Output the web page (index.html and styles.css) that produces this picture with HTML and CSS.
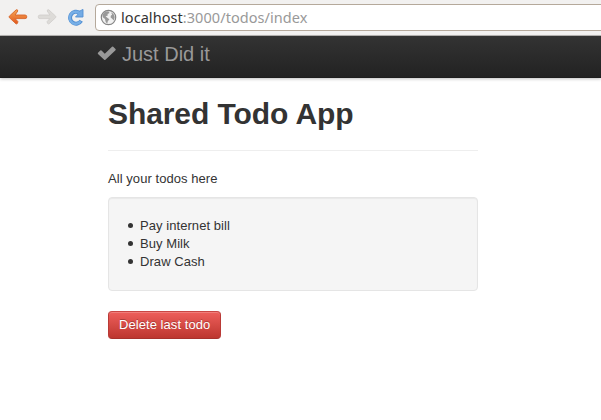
FILE: index.html
```html
<!DOCTYPE html>
<html lang="en">
<head>
<meta charset="utf-8">
<title>Shared Todo App</title>
<link rel="stylesheet" href="styles.css">
</head>
<body>
<header class="toolbar">
  <svg class="tool back" width="20" height="18" viewBox="0 0 20 18"><defs><linearGradient id="o" x2="0" y2="1"><stop offset="0" stop-color="#f5a755"/><stop offset="1" stop-color="#e2561c"/></linearGradient></defs><path d="M8.2 1.8 Q9.8 1.3 9.8 3 L7.1 7 H17 Q18.8 7 18.8 8.9 Q18.8 10.6 17 10.6 H7.1 L9.9 13.6 Q10 15.8 8.2 16 L1.3 9.6 Q.7 8.9 1.3 8.2 Z" fill="url(#o)" stroke="#d7652b" stroke-width=".9"/></svg>
  <svg class="tool forward" width="20" height="18" viewBox="0 0 20 18"><path d="M11.8 1.8 Q10.2 1.3 10.2 3 L12.9 7 H3 Q1.2 7 1.2 8.9 Q1.2 10.6 3 10.6 H12.9 L10.1 13.6 Q10 15.8 11.8 16 L18.7 9.6 Q19.3 8.9 18.7 8.2 Z" fill="#dddbd8" stroke="#cfcdca" stroke-width=".8"/></svg>
  <svg class="tool reload" width="18" height="18" viewBox="0 0 18 18"><path d="M14.2 12.8 A6 6 0 1 1 12.6 4.8" fill="none" stroke="#5490d2" stroke-width="4"/><path d="M16 1.4 V9 H8.5 L10.7 6.7 L10 5.2 L12.5 3.2 Z" fill="#73abe4" stroke="#5490d2" stroke-width=".9"/><path d="M13.6 13.3 A6 6 0 1 1 11.8 4.6" fill="none" stroke="#77afe7" stroke-width="2.3"/></svg>
  <div class="address">
    <svg class="globe" width="17" height="17" viewBox="0 0 17 17"><circle cx="8.5" cy="8.5" r="7.2" fill="#f1f1f1" stroke="#858585" stroke-width="1.2"/><path d="M2.4 5.7 L4.8 2.8 L8.4 2.3 L9.6 3.9 L7.5 5.1 L7.8 6.5 L5.6 7.3 L7.6 9 L9.4 10.2 L7.8 12.3 L7.2 14.7 L5.7 12.9 L5 10 L2.8 8.3 Z M11 3.3 L13.5 4.9 L14.7 8 L13.8 11.4 L12.2 9.7 L10.5 8.2 L11 6.4 L12.2 5.8 Z" fill="#999"/></svg>
    <span class="url"><b>localhost</b>:3000/todos/index</span>
  </div>
</header>
<nav class="navbar">
  <a class="brand"><svg class="check" width="20" height="15" viewBox="0 0 20 15"><path d="M1 6.8 L3.3 4.5 Q3.9 4 4.5 4.5 L7.8 7.7 L15 .8 Q15.6 .3 16.2 .8 L18.5 3 Q19 3.6 18.5 4.2 L8.4 13.8 Q7.8 14.3 7.2 13.8 L1 8 Q.5 7.4 1 6.8 Z" fill="#999"/></svg><span>Just Did it</span></a>
</nav>
<main class="content">
  <h1>Shared Todo App</h1>
  <p>All your todos here</p>
  <div class="well">
    <ul>
      <li>Pay internet bill</li>
      <li>Buy Milk</li>
      <li>Draw Cash</li>
    </ul>
  </div>
  <button class="btn-danger">Delete last todo</button>
</main>
</body>
</html>
```
FILE: styles.css
```css
* { box-sizing: border-box; }
body {
  margin: 0;
  height: 420px;
  overflow: hidden;
  background: #fff;
  color: #333;
  font: 13px/18px "Liberation Sans", Arial, sans-serif;
  letter-spacing: .06px;
}
.toolbar {
  display: flex;
  align-items: flex-start;
  height: 36px;
  padding: 4px 0 0 8px;
  background: #f2f1f0;
  border-bottom: 1px solid #b8b6b4;
}
.tool { flex: none; margin-top: 4px; }
.forward { margin-left: 9px; }
.reload { margin-left: 10px; }
.address {
  display: flex;
  align-items: center;
  flex: 1;
  height: 27px;
  margin: 0 -6px 0 10px;
  padding-left: 4px;
  background: #fff;
  border: 1px solid #b5a99b;
  border-radius: 4px;
}
.globe { flex: none; }
.url {
  margin: 0 0 2px 4px;
  color: #999;
  font: 14.5px/20px "Noto Sans", sans-serif;
  letter-spacing: .06px;
  white-space: nowrap;
}
.url b { color: #333; font-weight: 400; }
.navbar {
  height: 42px;
  padding-left: 97px;
  background: linear-gradient(#333, #222);
  box-shadow: 0 1px 3px rgba(0, 0, 0, .25), inset 0 -1px 0 rgba(0, 0, 0, .1);
}
.brand {
  display: flex;
  align-items: center;
  height: 36px;
  color: #999;
  font-size: 20px;
  line-height: 20px;
  letter-spacing: 0;
}
.check { margin: 0 5px 1px 0; }
.content { width: 370px; margin: 18px 0 0 108px; }
h1 {
  height: 55px;
  margin: 0 0 19px;
  border-bottom: 1px solid #eee;
  font-size: 30px;
  line-height: 36px;
  letter-spacing: -.08px;
}
p { margin: 0 0 9px; }
.well {
  height: 94px;
  margin-bottom: 20px;
  padding: 19px;
  background: #f5f5f5;
  border: 1px solid #e5e5e5;
  border-radius: 4px;
  box-shadow: inset 0 1px 1px rgba(0, 0, 0, .05);
}
ul { margin: 0; padding: 0; list-style: none; }
li {
  display: flex;
  align-items: center;
}
li::before {
  content: "";
  width: 5px;
  height: 5px;
  margin: 0 7px 1px 0;
  border-radius: 50%;
  background: #333;
}
.btn-danger {
  display: block;
  width: 113px;
  height: 28px;
  padding: 0 10px;
  color: #fff;
  background: linear-gradient(#ee5f5b, #bd362f);
  border: 1px solid;
  border-color: #c94643 #b93a36 #a8312c;
  border-radius: 4px;
  box-shadow: inset 0 1px 0 rgba(255, 255, 255, .2);
  font: 13px/18px "Liberation Sans", Arial, sans-serif;
  letter-spacing: .06px;
  white-space: nowrap;
  text-shadow: 0 -1px 0 rgba(0, 0, 0, .25);
}
```
